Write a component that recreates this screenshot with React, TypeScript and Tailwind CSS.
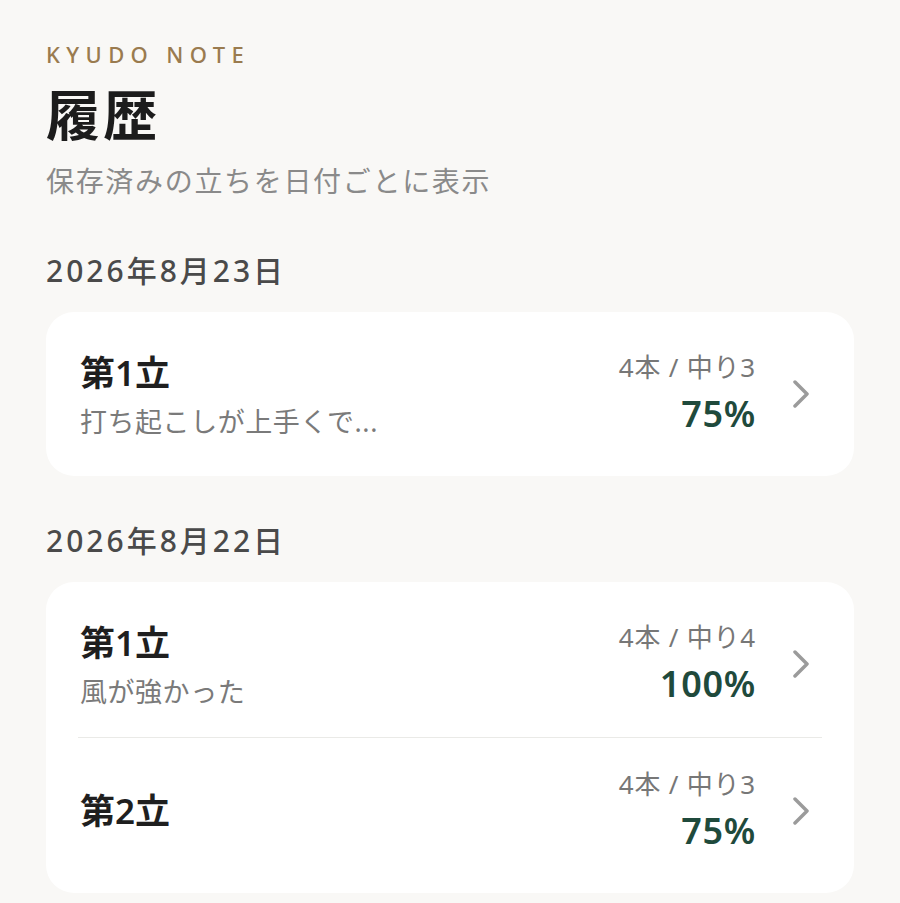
const jp = "font-['Noto_Sans','Noto_Sans_CJK_JP',sans-serif]";

type Tachi = { name: string; note?: string; shots: number; hits: number };
type Day = { date: string; tachi: Tachi[] };

const days: Day[] = [
  { date: "2026年8月23日", tachi: [{ name: "第1立", note: "打ち起こしが上手くで...", shots: 4, hits: 3 }] },
  {
    date: "2026年8月22日",
    tachi: [
      { name: "第1立", note: "風が強かった", shots: 4, hits: 4 },
      { name: "第2立", shots: 4, hits: 3 },
    ],
  },
];

const Chevron = () => (
  <svg width="16" height="28" viewBox="0 0 16 28" fill="none" className="shrink-0">
    <path d="M2 2 L14 14 L2 26" stroke="#9b9b9b" strokeWidth="3.5" strokeLinecap="round" strokeLinejoin="round" />
  </svg>
);

const TachiRow = ({ t }: { t: Tachi }) => (
  <div className="flex items-center h-[146px] pl-[34px] pr-[45px]">
    <div className={`flex-1 flex flex-col ${t.note ? "pt-[6px]" : ""}`}>
      <div className="text-[35px] leading-[50px] font-semibold text-[#1f1f1f]">{t.name}</div>
      {t.note && <div className="text-[27px] leading-[48px] tracking-[0.02em] text-[#7a7a7a]">{t.note}</div>}
    </div>
    <div className="flex flex-col items-end">
      <div className="text-[26px] leading-[40px] tracking-[0.03em] text-[#777777]">
        {t.shots}本 / 中り{t.hits}
      </div>
      <div className="text-[36px] leading-[54px] font-semibold tracking-[0.02em] text-[#1f4a3c]">
        {Math.round((t.hits / t.shots) * 100)}%
      </div>
    </div>
    <div className="ml-[37px]">
      <Chevron />
    </div>
  </div>
);

export default function App() {
  return (
    <div className={`min-h-screen bg-[#f9f8f6] px-[46px] pt-[39px] ${jp}`}>
      <div className="text-[22px] leading-[30px] font-medium tracking-[0.29em] text-[#9a7b4f]">KYUDO NOTE</div>
      <h1 className="mt-[14px] text-[54px] leading-[64px] font-bold tracking-[0.06em] text-[#1c1c1c]">履歴</h1>
      <p className="mt-[14px] text-[28px] leading-[40px] tracking-[0.06em] text-[#8a8a8a]">保存済みの立ちを日付ごとに表示</p>

      <div className="mt-[50px] flex flex-col gap-[45px]">
        {days.map((d) => (
          <section key={d.date}>
            <h2 className="text-[30px] leading-[40px] font-medium tracking-[0.1em] text-[#4a4a4a]">{d.date}</h2>
            <div className="mt-[21px] bg-white rounded-[28px] py-[9px]">
              {d.tachi.map((t, i) => (
                <div key={i}>
                  {i > 0 && <div className="mx-[32px] h-px bg-[#eaeae7]" />}
                  <TachiRow t={t} />
                </div>
              ))}
            </div>
          </section>
        ))}
      </div>
    </div>
  );
}
